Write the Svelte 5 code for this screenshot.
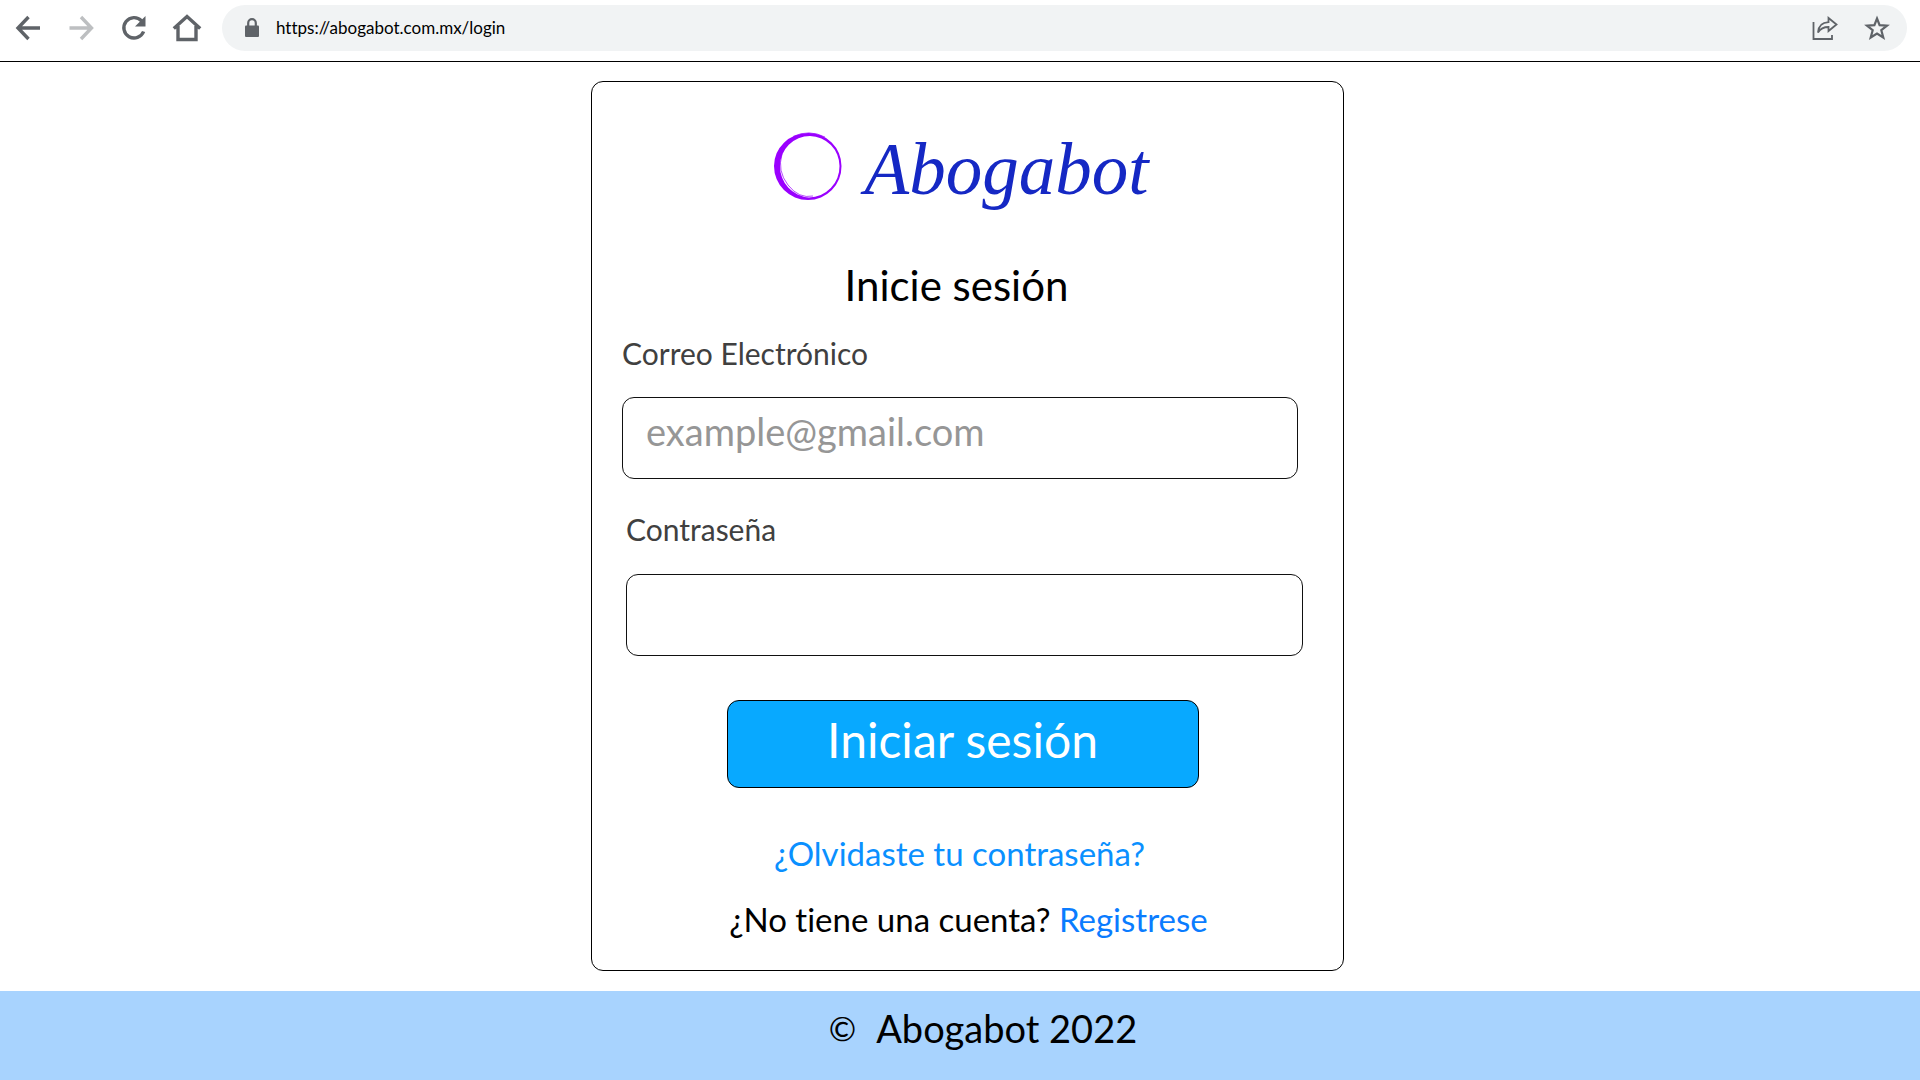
<script>
  let email = $state('');
  let password = $state('');
</script>

<div class="page">
  <header class="toolbar">
    <button type="button" class="nav" aria-label="Atrás">
      <svg viewBox="0 0 36 36"><path class="line" d="M30 18H8.500M18.500 7 8 18 18.500 29" /></svg>
    </button>
    <button type="button" class="nav forward" aria-label="Adelante">
      <svg viewBox="0 0 36 36"><path class="line" d="M6.500 18H28M18 7 28.500 18 18 29" /></svg>
    </button>
    <button type="button" class="nav" aria-label="Recargar">
      <svg viewBox="0 0 36 36">
        <path class="line" d="M27.600 21.500A10.200 10.200 0 1 1 25.500 10.800L27.500 13" />
        <path class="solid" d="M29.500 6V16.500H19z" />
      </svg>
    </button>
    <button type="button" class="nav" aria-label="Inicio">
      <svg viewBox="0 0 36 36"><path class="line" d="M4.800 18.500 18 6.500 31.200 18.500M9 16V29.500H27V16" /></svg>
    </button>
    <div class="omnibox">
      <svg class="lock" viewBox="0 0 14 20">
        <rect class="solid" x="0" y="7.500" width="14" height="11.500" rx="1" />
        <path class="shackle" d="M3.200 8.500V5a3.800 3.800 0 0 1 7.600 0V8.500" />
      </svg>
      <input class="url" type="text" value="https://abogabot.com.mx/login" aria-label="Dirección" />
      <button type="button" class="action" aria-label="Compartir">
        <svg viewBox="0 0 26 26">
          <path class="thin" d="M1.500 7V24H20V20" />
          <path class="thin" d="M6 17.500C6.500 11 10.500 7.500 16.500 7.200V3L24.500 9.500 16.500 16V12C12 12 8.500 13.500 6 17.500z" />
        </svg>
      </button>
      <button type="button" class="action" aria-label="Añadir a marcadores">
        <svg viewBox="0 0 26 26">
          <path class="star" d="M13 3.500 15.600 10.200 23 10.600 17.300 15.200 19.300 22.500 13 18.500 6.700 22.500 8.700 15.200 3 10.600 10.400 10.200z" />
        </svg>
      </button>
    </div>
  </header>

  <main>
    <form class="card" onsubmit={(e) => e.preventDefault()}>
      <div class="brand">
        <svg class="ring" viewBox="0 0 70 70" aria-hidden="true">
          <path
            class="brush"
            fill-rule="evenodd"
            d="M35 2A33 33 0 0 1 68.500 35A33.500 33.500 0 0 1 35 69A34 34 0 0 1 1 35A34 33 0 0 1 35 2zM37 5A30 30 0 0 0 7 35A31 31 0 0 0 36 66.500A31 31 0 0 0 66.500 35A30 30 0 0 0 37 5z"
          />
          <path class="hair" d="M20 5.500Q36 -2 52 6" />
          <path class="hair" d="M9 23Q4 40 15 54T40 65" />
        </svg>
        <span class="wordmark">Abogabot</span>
      </div>

      <h1>Inicie sesión</h1>

      <div class="field">
        <label for="email">Correo Electrónico</label>
        <input id="email" type="email" placeholder="example@gmail.com" bind:value={email} />
      </div>

      <div class="field shifted">
        <label for="password">Contraseña</label>
        <input id="password" type="password" bind:value={password} />
      </div>

      <button type="submit" class="submit">Iniciar sesión</button>

      <p class="forgot"><a href="#recuperar">¿Olvidaste tu contraseña?</a></p>
      <p class="signup">¿No tiene una cuenta? <a href="#registro">Registrese</a></p>
    </form>
  </main>

  <footer><span class="mark">©</span><span>Abogabot 2022</span></footer>
</div>

<style>
  :global(body) {
    margin: 0;
    background: #fff;
  }

  .page {
    display: flex;
    flex-direction: column;
    min-height: 100vh;
    font-family: Lato, 'Open Sans', sans-serif;
    font-variant-ligatures: none;
    color: #000;
  }

  .page *,
  .page {
    box-sizing: border-box;
  }

  button,
  input {
    font: inherit;
    color: inherit;
    margin: 0;
    padding: 0;
    border: 0;
    background: none;
  }

  svg {
    display: block;
    overflow: visible;
  }

  .toolbar {
    display: flex;
    align-items: center;
    gap: 17px;
    padding: 5px 13px 10px 10px;
    border-bottom: 1px solid #000;
    color: #5f6368;
  }

  .nav,
  .nav svg {
    width: 36px;
    height: 36px;
  }

  .forward {
    color: #bdbfc1;
  }

  .line,
  .shackle,
  .thin,
  .star {
    fill: none;
    stroke: currentColor;
  }

  .line {
    stroke-width: 3.4;
  }

  .shackle,
  .star {
    stroke-width: 2.2;
  }

  .thin {
    stroke-width: 1.8;
  }

  .solid {
    fill: currentColor;
  }

  .omnibox {
    flex: 1;
    display: flex;
    align-items: center;
    height: 46px;
    padding: 0 17px 0 23px;
    border-radius: 23px;
    background: #f1f3f4;
  }

  .lock {
    width: 14px;
    height: 20px;
    margin-right: 17px;
  }

  .url {
    flex: 1;
    min-width: 0;
    font-size: 17px;
    line-height: 24px;
    color: #000;
  }

  .action,
  .action svg {
    width: 26px;
    height: 26px;
  }

  .action + .action {
    margin-left: 26px;
  }

  main {
    flex: 1;
    display: flex;
    justify-content: center;
    padding: 19px 0 20px 15px;
  }

  .card {
    display: flex;
    flex-direction: column;
    width: 100%;
    max-width: 753px;
    padding: 40px 40px 30px 30px;
    border: 1px solid #000;
    border-radius: 12px;
  }

  .brand {
    display: flex;
    align-items: center;
    justify-content: center;
    gap: 22px;
    height: 96px;
    padding-right: 4px;
  }

  .ring {
    width: 70px;
    height: 70px;
    margin-bottom: 8px;
  }

  .brush {
    fill: #9a00ff;
  }

  .hair {
    fill: none;
    stroke: #9a00ff;
    stroke-width: 0.7;
  }

  .wordmark {
    font-family: 'Liberation Serif', serif;
    font-style: italic;
    font-size: 73px;
    line-height: 96px;
    color: #1528c4;
  }

  h1 {
    margin: 42px 0 25px;
    padding-right: 12px;
    font-size: 42px;
    line-height: 50px;
    font-weight: 400;
    text-align: center;
  }

  .field {
    display: flex;
    flex-direction: column;
    gap: 26px;
    margin-right: 4px;
  }

  .shifted {
    gap: 27px;
    margin: 32px 0 0 4px;
  }

  label {
    font-size: 30px;
    line-height: 36px;
    color: #404040;
  }

  .field input {
    width: 100%;
    height: 82px;
    padding: 0 23px 14px;
    border: 1px solid #111;
    border-radius: 12px;
    font-size: 38px;
    line-height: 46px;
  }

  .field.shifted {
    margin-right: 0;
  }

  .field:not(.shifted) {
    margin-right: 5px;
  }

  .field input::placeholder {
    color: #969696;
    opacity: 1;
  }

  .submit {
    align-self: center;
    width: 472px;
    max-width: 100%;
    height: 88px;
    margin-top: 44px;
    padding-bottom: 8px;
    border: 1px solid #000;
    border-radius: 12px;
    background: #08a9ff;
    color: #fff;
    font-size: 48px;
    line-height: 58px;
  }

  p {
    margin: 0;
    font-size: 33px;
    line-height: 40px;
    text-align: center;
  }

  a {
    color: #0a7cff;
    text-decoration: none;
  }

  .forgot {
    margin: 45px 0 26px;
    padding-right: 6px;
  }

  .forgot a {
    color: #0a90ff;
  }

  .signup {
    padding-left: 12px;
  }

  footer {
    display: flex;
    justify-content: center;
    gap: 20px;
    padding: 14px 0 29px 46px;
    background: #a8d3fe;
    font-size: 38px;
    line-height: 46px;
  }

  .mark {
    font-size: 33px;
  }
</style>
